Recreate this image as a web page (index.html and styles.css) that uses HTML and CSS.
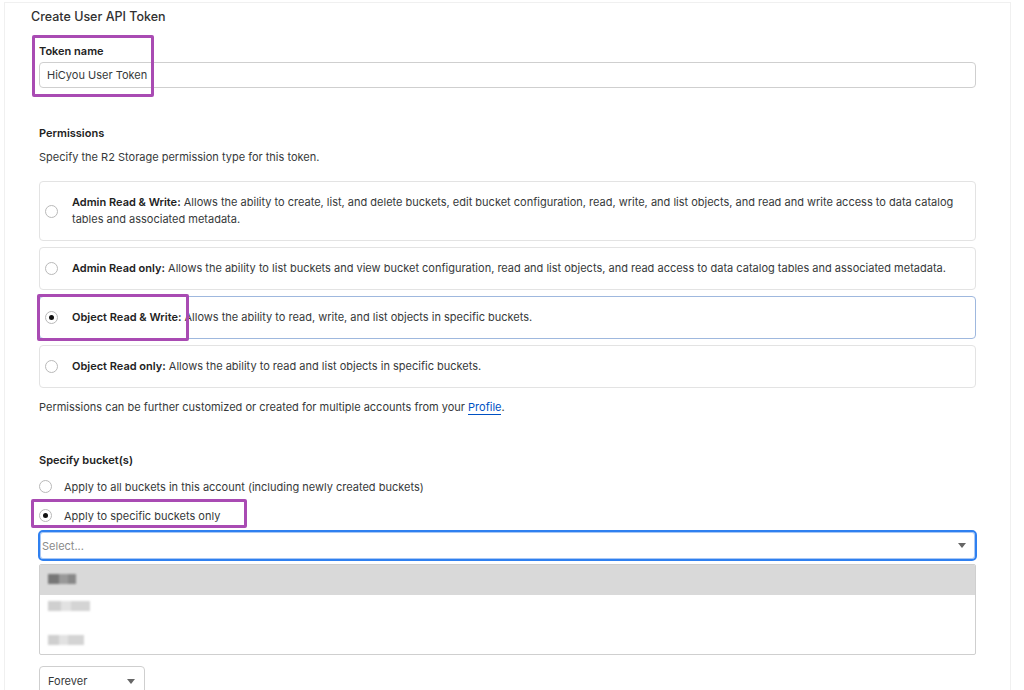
FILE: index.html
```html
<!DOCTYPE html>
<html lang="en">
<head>
  <meta charset="UTF-8">
  <title>Create User API Token</title>
  <link rel="stylesheet" href="styles.css">
</head>
<body>

  <div class="panel">
    <h2 class="page-title">Create User API Token</h2>

    <div class="form">
      <!-- Token name -->
      <div class="field">
        <label class="field-label">Token name</label>
        <div class="text-input">HiCyou User Token</div>
      </div>

      <!-- Permissions -->
      <div class="field permissions">
        <div class="field-label">Permissions</div>
        <p class="hint">Specify the R2 Storage permission type for this token.</p>

        <div class="options">
          <div class="option">
            <span class="radio"></span>
            <span class="option-text"><b>Admin Read &amp; Write:</b> Allows the ability to create, list, and delete buckets, edit bucket configuration, read, write, and list objects, and read and write access to data catalog tables and associated metadata.</span>
          </div>
          <div class="option">
            <span class="radio"></span>
            <span class="option-text"><b>Admin Read only:</b> Allows the ability to list buckets and view bucket configuration, read and list objects, and read access to data catalog tables and associated metadata.</span>
          </div>
          <div class="option selected">
            <span class="radio checked"></span>
            <span class="option-text"><b>Object Read &amp; Write:</b> Allows the ability to read, write, and list objects in specific buckets.</span>
          </div>
          <div class="option">
            <span class="radio"></span>
            <span class="option-text"><b>Object Read only:</b> Allows the ability to read and list objects in specific buckets.</span>
          </div>
        </div>

        <p class="note">Permissions can be further customized or created for multiple accounts from your <a href="#" class="link">Profile</a>.</p>
      </div>

      <!-- Buckets -->
      <div class="field buckets">
        <div class="field-label">Specify bucket(s)</div>
        <div class="bucket-choice first">
          <span class="radio"></span>
          <span>Apply to all buckets in this account (including newly created buckets)</span>
        </div>
        <div class="bucket-choice">
          <span class="radio checked"></span>
          <span>Apply to specific buckets only</span>
        </div>

        <div class="select focused">
          <span class="placeholder">Select...</span>
          <span class="caret"></span>
        </div>
        <div class="menu">
          <div class="menu-item active"><span class="blur w1"></span></div>
          <div class="menu-item"><span class="blur w2"></span></div>
          <div class="menu-item"><span class="blur w3"></span></div>
        </div>

        <div class="select small">
          <span>Forever</span>
          <span class="caret"></span>
        </div>
      </div>
    </div>

    <!-- Highlight boxes drawn over the screenshot -->
    <div class="mark mark-name"></div>
    <div class="mark mark-object"></div>
    <div class="mark mark-bucket"></div>
  </div>

</body>
</html>
```

FILE: styles.css
```css
body {
  margin: 0;
  font-family: Inter, 'Noto Sans', sans-serif;
  font-size: 11px;
  color: #36393a;
  background-color: #fff;
  overflow: hidden;
}

/* Outer card */
.panel {
  position: relative;
  margin: 2px 0 0 4px;
  width: 1007px;
  height: 700px;
  border-top: 1px solid #f0f0f0;
  border-left: 1px solid #f0f0f0;
  border-right: 1px solid #f0f0f0;
  box-sizing: border-box;
}

.page-title {
  margin: 0;
  padding: 4px 0 0 26px;
  font-size: 12.5px;
  line-height: 20px;
  font-weight: 500;
  color: #313131;
}

.form {
  padding: 0 34px 0 34px;
}

.field-label {
  display: block;
  font-weight: 600;
  line-height: 16px;
  color: #222;
}

.field {
  margin-top: 16px;
}

.text-input {
  margin-top: 3px;
  height: 26px;
  box-sizing: border-box;
  border: 1px solid #cfcfcf;
  border-radius: 4px;
  padding: 0 7px;
  line-height: 24px;
  color: #36393a;
}

/* Permissions */
.permissions {
  margin-top: 37px;
}

.hint {
  margin: 8px 0 0;
  line-height: 16px;
}

.options {
  display: flex;
  flex-direction: column;
  gap: 6px;
  margin-top: 16px;
}

.option {
  display: flex;
  align-items: center;
  gap: 14px;
  padding: 12px 8px 12px 5px;
  border: 1px solid #e3e3e3;
  border-radius: 4px;
  line-height: 17px;
}

.option.selected {
  border-color: #9fb8de;
}

.option-text b {
  font-weight: 600;
  color: #222;
}

.radio {
  flex-shrink: 0;
  display: inline-block;
  width: 13px;
  height: 13px;
  border: 1px solid #b9b9b9;
  border-radius: 50%;
  box-sizing: border-box;
  position: relative;
}

.radio.checked::after {
  content: "";
  position: absolute;
  left: 3px;
  top: 3px;
  width: 5px;
  height: 5px;
  border-radius: 50%;
  background-color: #111;
}

.note {
  margin: 11px 0 0;
  line-height: 16px;
}

.link {
  color: #0051c3;
  text-decoration: none;
  border-bottom: 1px solid #0051c3;
}

/* Buckets */
.buckets {
  margin-top: 37px;
}

.bucket-choice {
  display: flex;
  align-items: center;
  gap: 12px;
  height: 29px;
  line-height: 16px;
}

.bucket-choice.first {
  margin-top: 4px;
}

.select {
  display: flex;
  align-items: center;
  justify-content: space-between;
  box-sizing: border-box;
  border: 1px solid #cfcfcf;
  border-radius: 4px;
  padding: 0 8px;
  color: #36393a;
}

.select.focused {
  margin: 0 -1px;
  height: 31px;
  border: 2px solid #2f80f0;
  box-shadow: inset 0 0 0 1px #a9c8f5;
  border-radius: 5px;
  padding: 0 9px 0 2px;
}

.placeholder {
  color: #8a8a8a;
}

.caret {
  width: 0;
  height: 0;
  border-left: 4px solid transparent;
  border-right: 4px solid transparent;
  border-top: 5px solid #666;
}

.menu {
  margin-top: 3px;
  border: 1px solid #cfcfcf;
  border-radius: 2px;
  height: 91px;
  box-sizing: border-box;
  overflow: hidden;
}

.menu-item {
  height: 30px;
  display: flex;
  align-items: center;
  padding-left: 8px;
}

.menu-item.active {
  background-color: #d9d9d9;
  align-items: flex-start;
  padding-top: 9px;
  box-sizing: border-box;
}

.menu-item + .menu-item {
  align-items: flex-start;
  padding-top: 6px;
  box-sizing: border-box;
  height: 34px;
}

.blur {
  display: inline-block;
  height: 10px;
  background: linear-gradient(90deg, #cfcfcf 0 30%, #e2e2e2 30% 55%, #d4d4d4 55% 100%);
  filter: blur(0.8px);
}

.menu-item.active .blur {
  background: linear-gradient(90deg, #777 0 40%, #999 40% 70%, #888 70% 100%);
}

.w1 { width: 28px; }
.w2 { width: 42px; }
.w3 { width: 36px; }

.select.small {
  margin-top: 11px;
  width: 106px;
  height: 30px;
  padding: 0 9px 0 8px;
}

/* Purple annotation boxes */
.mark {
  position: absolute;
  border: 3px solid #a94bb3;
  border-radius: 2px;
  box-sizing: border-box;
}

.mark-name {
  left: 27px;
  top: 32px;
  width: 122px;
  height: 62px;
}

.mark-object {
  left: 32px;
  top: 291px;
  width: 152px;
  height: 47px;
}

.mark-bucket {
  left: 26px;
  top: 496px;
  width: 216px;
  height: 29px;
}
```
